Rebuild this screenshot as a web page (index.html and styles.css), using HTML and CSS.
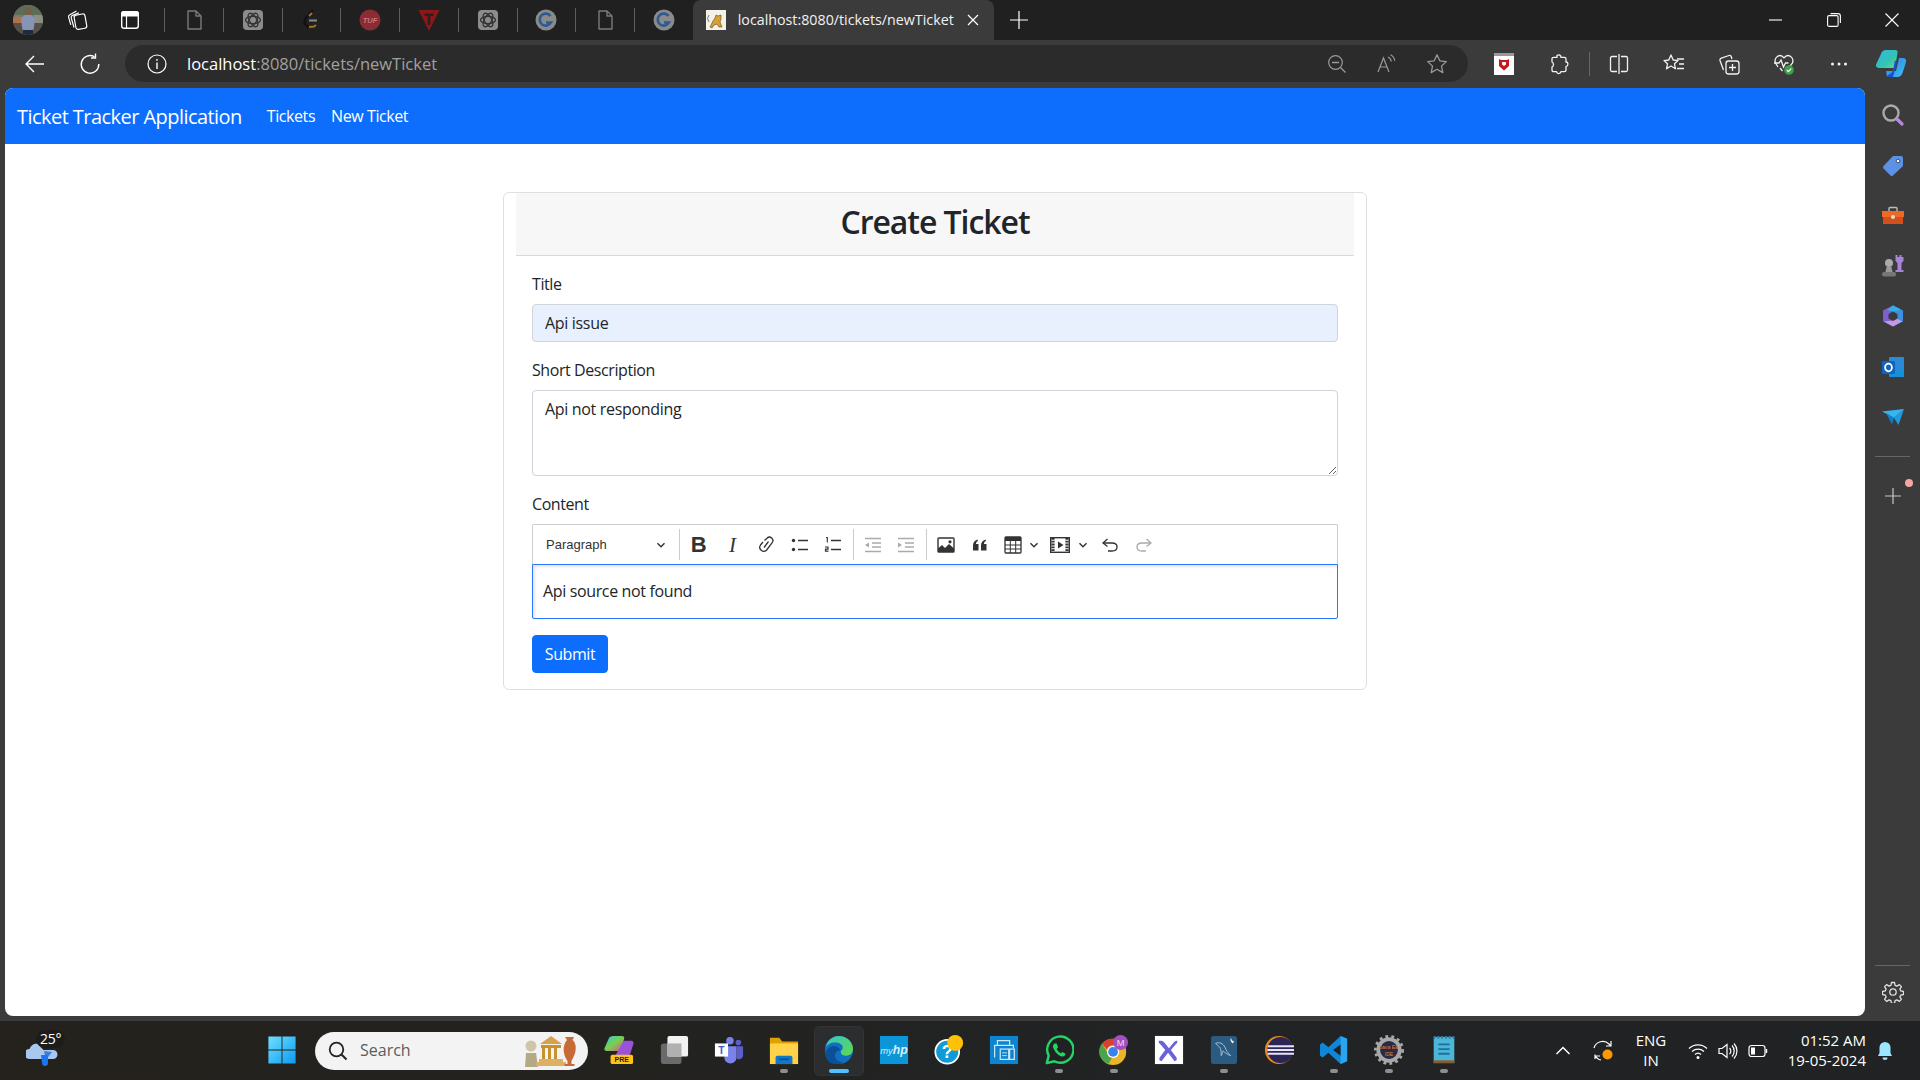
FILE: index.html
```html
<!DOCTYPE html>
<html lang="en">
<head>
<meta charset="utf-8">
<title>localhost:8080/tickets/newTicket</title>
<link rel="stylesheet" href="styles.css">
</head>
<body>
<svg class="defs" aria-hidden="true">
  <symbol id="doc" viewBox="0 0 24 24"><path d="M6 3h8l5 5v13H6z M14 3v5h5" fill="none" stroke="#7a7a7a" stroke-width="1.4" stroke-linejoin="round"/></symbol>
  <symbol id="gpt" viewBox="0 0 24 24"><rect x="2" y="2" width="20" height="20" rx="4" fill="#8c8c8c"/><g fill="none" stroke="#333" stroke-width="1.3"><ellipse cx="12" cy="12" rx="7.5" ry="3.6"/><ellipse cx="12" cy="12" rx="7.5" ry="3.6" transform="rotate(60 12 12)"/><ellipse cx="12" cy="12" rx="7.5" ry="3.6" transform="rotate(120 12 12)"/></g></symbol>
  <symbol id="gg" viewBox="0 0 24 24"><circle cx="12" cy="12" r="10.5" fill="#8a8a8a"/><path d="M16.5 8a6 6 0 1 0 .5 6.5H12" fill="none" stroke="#2d5a94" stroke-width="2.6"/></symbol>
  <symbol id="chev" viewBox="0 0 10 10"><path d="M1.5 3.2 5 6.8l3.5-3.6" fill="none" stroke="#333" stroke-width="1.4"/></symbol>
</svg>

<header class="tabstrip">
  <div class="tab-lead lead-a">
    <svg class="ic30" viewBox="0 0 30 30"><defs><clipPath id="av"><circle cx="15" cy="15" r="15"/></clipPath></defs><g clip-path="url(#av)"><rect width="30" height="30" fill="#7a7a70"/><rect width="30" height="10" fill="#5d6e55"/><rect y="12" width="10" height="6" fill="#b0704a"/><rect x="21" y="10" width="9" height="9" fill="#8a8f80"/><rect y="18" width="30" height="12" fill="#55504a"/><path d="M8 13l4-3h6l4 3-1 9-1 4H10l-1-4z" fill="#8794b4"/><circle cx="15" cy="6.500" r="3.500" fill="#7a5c48"/><rect x="10" y="25" width="10" height="5" fill="#1f2a3c"/></g></svg>
  </div>
  <div class="tab-lead lead-b">
    <svg class="ic22" viewBox="0 0 22 22"><g fill="none" stroke="#fff" stroke-width="1.200" stroke-linejoin="round"><rect x="9" y="5.500" width="11" height="14.500" rx="2.300" transform="rotate(-10 14 13)"/><path d="M8 18.500 5.200 8.800c-.3-1.100.2-2 1.300-2.400L13 3.800"/><path d="M4.800 15.800 2.600 8.200c-.3-1.100.2-2 1.300-2.400L10.500 2"/></g></svg>
  </div>
  <div class="tab-lead lead-c">
    <svg class="ic22" viewBox="0 0 22 22"><rect x="2.700" y="2.700" width="16.600" height="16.600" rx="2.500" fill="none" stroke="#fff" stroke-width="1.400"/><path d="M2 7.500V5a3 3 0 0 1 3-3h12a3 3 0 0 1 3 3v2.500z" fill="#fff"/><path d="M7.500 7v12" stroke="#fff" stroke-width="1.200"/></svg>
  </div>
  <div class="tab-pin"><svg class="ic24"><use href="#doc"/></svg></div>
  <div class="tab-pin"><svg class="ic24"><use href="#gpt"/></svg></div>
  <div class="tab-pin"><svg class="ic24" viewBox="0 0 24 24"><path d="M14 2 6.500 10.500c-1.500 2-1.500 4 0 6l3 3" fill="none" stroke="#111" stroke-width="2"/><path d="M10 8l3-3M10 19l5-.5 2-1.500" fill="none" stroke="#a8701a" stroke-width="2"/><path d="M10 12.500h8" stroke="#8a8a8a" stroke-width="2"/></svg></div>
  <div class="tab-pin"><svg class="ic24" viewBox="0 0 24 24"><circle cx="12" cy="12" r="10.500" fill="#8a2c34"/><text x="12" y="14.500" class="tuf">TUF</text></svg></div>
  <div class="tab-pin"><svg class="ic24" viewBox="0 0 24 24"><path d="M1.500 2h21L12 23z" fill="#8c1717"/><path d="M7.500 5.500h9v2.500h-3.200v9h-2.600V8H7.500z" fill="#2a2020"/></svg></div>
  <div class="tab-pin"><svg class="ic24"><use href="#gpt"/></svg></div>
  <div class="tab-pin"><svg class="ic24"><use href="#gg"/></svg></div>
  <div class="tab-pin"><svg class="ic24"><use href="#doc"/></svg></div>
  <div class="tab-pin"><svg class="ic24"><use href="#gg"/></svg></div>
  <div class="tab-active">
    <svg class="ic20" viewBox="0 0 20 20"><rect width="20" height="20" fill="#f4f1e8"/><path d="M4 17l3-6 2-3 1-3 2 1 3-1 0 4-1 3 2 5h-3l-2-3-3 1-2 3z" fill="#d9a032" stroke="#5a4420" stroke-width=".6"/><path d="M3 12 1.500 8.500 3 5" fill="none" stroke="#777" stroke-width="1"/></svg>
    <span class="tab-title">localhost:8080/tickets/newTicket</span>
    <svg class="ic12" viewBox="0 0 12 12"><path d="M1 1l10 10M11 1 1 11" stroke="#fff" stroke-width="1.200"/></svg>
  </div>
  <svg class="newtab" viewBox="0 0 18 18"><path d="M9 0v18M0 9h18" stroke="#fff" stroke-width="1.200"/></svg>
  <div class="winbtns">
    <svg class="ic14" viewBox="0 0 14 14"><path d="M0 7h13" stroke="#fff" stroke-width="1.100"/></svg>
    <svg class="ic14" viewBox="0 0 14 14"><rect x=".6" y="2.600" width="10.500" height="10.800" rx="1.500" fill="none" stroke="#fff" stroke-width="1.100"/><path d="M3.500.6h7.500a2.400 2.400 0 0 1 2.400 2.400v7" fill="none" stroke="#fff" stroke-width="1.100"/></svg>
    <svg class="ic14" viewBox="0 0 14 14"><path d="M.5.5l13 13M13.500.5l-13 13" stroke="#fff" stroke-width="1.100"/></svg>
  </div>
</header>

<nav class="toolbar">
  <div class="nav-btn"><svg class="ic22" viewBox="0 0 22 22"><path d="M20 11H2.500M10 3 2 11l8 8" fill="none" stroke="#fff" stroke-width="1.400"/></svg></div>
  <div class="nav-btn"><svg class="ic22" viewBox="0 0 22 22"><path d="M15.500 3.800A8.800 8.800 0 1 0 19.800 11" fill="none" stroke="#fff" stroke-width="1.400"/><path d="M16.500 .5v4.500H12" fill="none" stroke="#fff" stroke-width="1.400"/></svg></div>
  <div class="omnibox">
    <svg class="ic20" viewBox="0 0 20 20"><circle cx="10" cy="10" r="9" fill="none" stroke="#fff" stroke-width="1.200"/><path d="M10 8.500V15M10 5v1.800" stroke="#fff" stroke-width="1.400"/></svg>
    <span class="url"><span class="url-host">localhost</span>:8080/tickets/newTicket</span>
    <div class="omni-actions">
      <svg class="ic20" viewBox="0 0 20 20"><circle cx="8.500" cy="8.500" r="6.800" fill="none" stroke="#9a9a9a" stroke-width="1.200"/><path d="M5 8.500h7M13.500 13.500l5 5" stroke="#9a9a9a" stroke-width="1.300"/></svg>
      <svg class="ic20" viewBox="0 0 20 20"><path d="M1 18 6.500 4l5.500 14M3 13h7" fill="none" stroke="#9a9a9a" stroke-width="1.200"/><path d="M11 3c2 .8 3 2.500 3.200 4.500M13.500 .8c2.500 1.200 4 3.500 4.200 6" fill="none" stroke="#9a9a9a" stroke-width="1.200"/></svg>
      <svg class="ic22" viewBox="0 0 22 22"><path d="M11 1.800l2.800 6 6.500.8-4.800 4.500 1.300 6.500-5.800-3.300-5.800 3.300 1.300-6.500L1.700 8.600l6.500-.8z" fill="none" stroke="#9a9a9a" stroke-width="1.300" stroke-linejoin="round"/></svg>
    </div>
  </div>
  <div class="tool-actions">
    <div class="tool-slot"><svg class="ic22" viewBox="0 0 22 22"><rect x="1" y="0" width="20" height="22" fill="#fff"/><rect x="1" y="0" width="20" height="3" fill="#999"/><path d="M6 6l2 1h6l2-1v7l-5 4.500L6 13z" fill="#c8161d"/><path d="M9 9h4v2.500l-2 1.500-2-1.500z" fill="#fff"/></svg></div>
    <div class="tool-slot"><svg class="ic22" viewBox="0 0 22 22"><path d="M9 2.500c2-1.500 4-.3 4 1.800h3.500c1 0 1.500.7 1.500 1.500V9c2.200 0 3 3.500 0 4.500v3.500c0 1-.7 1.700-1.500 1.700H13c-.5 2.500-4 2.500-4.500 0H5.500C4.500 18.700 4 18 4 17v-3c2-.8 2-4 0-5V5.800c0-1 .7-1.500 1.500-1.500H9z" fill="none" stroke="#f2f2f2" stroke-width="1.300"/></svg></div>
    <div class="tool-sep"></div>
    <div class="tool-slot"><svg class="ic22" viewBox="0 0 22 22"><path d="M9 3.500H4A1.500 1.500 0 0 0 2.500 5v12A1.500 1.500 0 0 0 4 18.500h5M13 3.500h5A1.500 1.500 0 0 1 19.500 5v12a1.500 1.500 0 0 1-1.500 1.500h-5M11 1v20" fill="none" stroke="#f2f2f2" stroke-width="1.300"/></svg></div>
    <div class="tool-slot"><svg class="ic22" viewBox="0 0 22 22"><path d="M8 2l2.200 5 4.800.6-3.500 3.200 1 5L8 13l-4.500 2.800 1-5L1 7.600l4.800-.6z" fill="none" stroke="#f2f2f2" stroke-width="1.300" stroke-linejoin="round"/><path d="M14 6h7M16 11h5M14 15.500h7" stroke="#f2f2f2" stroke-width="1.300"/></svg></div>
    <div class="tool-slot"><svg class="ic22" viewBox="0 0 22 22"><rect x="8" y="8" width="13" height="13" rx="2.500" fill="none" stroke="#f2f2f2" stroke-width="1.300"/><path d="M14.500 11v7M11 14.500h7" stroke="#f2f2f2" stroke-width="1.300"/><path d="M5.500 17 2 7.500c-.3-1 .2-2 1.300-2.300L11 2.500c1-.3 2 .3 2.300 1.300L14 6" fill="none" stroke="#f2f2f2" stroke-width="1.300"/></svg></div>
    <div class="tool-slot"><svg class="ic22" viewBox="0 0 22 22"><path d="M5 14 2.500 10C1 6 4 2.500 7 2.500c2 0 3 1 4 2.300 1-1.300 2-2.300 4-2.300 3 0 6 3.500 4.500 7.500l-4 5" fill="none" stroke="#f2f2f2" stroke-width="1.300"/><path d="M1 10h5l2-3 2.500 7 2-4h3" fill="none" stroke="#f2f2f2" stroke-width="1.300"/><path d="M7 15l2.500 3" stroke="#f2f2f2" stroke-width="1.300"/><circle cx="16" cy="17" r="4.800" fill="#3fa04a"/><path d="M13.800 17l1.600 1.600 2.800-3" fill="none" stroke="#fff" stroke-width="1.100"/></svg></div>
    <div class="tool-slot"><svg class="ic22" viewBox="0 0 22 22"><circle cx="4.500" cy="11" r="1.500" fill="#f2f2f2"/><circle cx="11" cy="11" r="1.500" fill="#f2f2f2"/><circle cx="17.500" cy="11" r="1.500" fill="#f2f2f2"/></svg></div>
    <div class="copilot-slot"><svg class="ic32" viewBox="0 0 32 32"><defs><linearGradient id="cpa" x1="0" y1="0" x2="1" y2="1"><stop offset="0" stop-color="#2fb7e8"/><stop offset=".6" stop-color="#33c4b0"/><stop offset="1" stop-color="#6ad69a"/></linearGradient><linearGradient id="cpb" x1="0" y1="0" x2="1" y2="1"><stop offset="0" stop-color="#2a7fe6"/><stop offset="1" stop-color="#40c0f0"/></linearGradient></defs><path d="M11 2h9c2 0 3 1 2.500 3L20 20H4c-2 0-3.500-1.500-3-3.500L6 6c.6-2.500 2.500-4 5-4z" fill="url(#cpa)"/><path d="M12 29h10c3 0 4.500-1.500 5.500-4L31 14c.6-2-.6-4-3-4H24l-3 13H11z" fill="url(#cpb)"/><path d="M20 12l-2 10c-.4 2-1.500 3-3.500 4L11 29h7l4-14z" fill="#1c52c8"/></svg></div>
  </div>
</nav>

<div class="main">
  <div class="gutter"></div>
  <main class="page">
    <div class="navbar">
      <a class="brand">Ticket Tracker Application</a>
      <a class="nav-link">Tickets</a>
      <a class="nav-link">New Ticket</a>
    </div>
    <section class="card">
      <div class="card-header"><h2 class="card-title">Create Ticket</h2></div>
      <form class="card-body">
        <div class="field">
          <label class="label">Title</label>
          <input class="control filled" type="text" value="Api issue">
        </div>
        <div class="field">
          <label class="label">Short Description</label>
          <textarea class="control area">Api not responding</textarea>
        </div>
        <div class="field">
          <label class="label">Content</label>
          <div class="ck-bar">
            <div class="ck-drop"><span class="ck-drop-text">Paragraph</span><svg class="ic10"><use href="#chev"/></svg></div>
            <span class="ck-sep"></span>
            <span class="ck-btn"><b class="ck-b">B</b></span>
            <span class="ck-btn"><i class="ck-i">I</i></span>
            <span class="ck-btn"><svg class="ic20" viewBox="0 0 20 20"><g fill="none" stroke="#333" stroke-width="1.300"><path d="M8.500 5.500 11 3.200a3.400 3.400 0 0 1 5 4.600l-5.500 7.400A4 4 0 0 1 4.500 10L7 7"/><path d="M12.500 6.500 8 12.500"/></g></svg></span>
            <span class="ck-btn"><svg class="ic20" viewBox="0 0 20 20"><circle cx="3.500" cy="5.500" r="1.700" fill="#333"/><circle cx="3.500" cy="14.500" r="1.700" fill="#333"/><path d="M8 5.500h10M8 14.500h10" stroke="#333" stroke-width="1.500"/></svg></span>
            <span class="ck-btn"><svg class="ic20" viewBox="0 0 20 20"><path d="M3 2.500h1.300v5" fill="none" stroke="#333" stroke-width="1.100"/><path d="M2 12h3v2.200H2.500v2H5.500" fill="none" stroke="#333" stroke-width="1.200"/><path d="M8 5.500h10M8 14.500h10" stroke="#333" stroke-width="1.500"/></svg></span>
            <span class="ck-sep"></span>
            <span class="ck-btn"><svg class="ic20" viewBox="0 0 20 20"><path d="M2 3.500h16M9 8h9M9 12h9M2 16.500h16" stroke="#aaa" stroke-width="1.500"/><path d="M6 7.500v5L2 10z" fill="#aaa"/></svg></span>
            <span class="ck-btn"><svg class="ic20" viewBox="0 0 20 20"><path d="M2 3.500h16M9 8h9M9 12h9M2 16.500h16" stroke="#aaa" stroke-width="1.500"/><path d="M2 7.500v5L6 10z" fill="#aaa"/></svg></span>
            <span class="ck-sep"></span>
            <span class="ck-btn"><svg class="ic20" viewBox="0 0 20 20"><rect x="2" y="3" width="16" height="14" rx=".8" fill="none" stroke="#333" stroke-width="1.400"/><path d="M2 17v-3.500l4-3.500 3 3 4-4 5 4.500V17z" fill="#333"/><circle cx="14" cy="6.800" r="1.600" fill="#333"/></svg></span>
            <span class="ck-btn"><svg class="ic20" viewBox="0 0 20 20"><path d="M3 15.500V10.500c0-3 1.500-5 4.500-6l.5 1.500C6.500 6.700 6 7.700 6 9h2.500v6.500zM11 15.500V10.500c0-3 1.500-5 4.500-6l.5 1.500c-1.500.7-2 1.700-2 3h2.500v6.500z" fill="#333"/></svg></span>
            <span class="ck-btn"><svg class="ic20" viewBox="0 0 20 20"><rect x="2" y="2" width="16" height="16" rx="1" fill="none" stroke="#333" stroke-width="1.300"/><rect x="2" y="2" width="16" height="4" fill="#333"/><path d="M7.300 6v12M12.700 6v12M2 10h16M2 14h16" stroke="#333" stroke-width="1"/></svg></span>
            <span class="ck-arrow"><svg class="ic10"><use href="#chev"/></svg></span>
            <span class="ck-btn ck-gap"><svg class="ic20" viewBox="0 0 20 20"><rect x=".7" y="2.700" width="18.600" height="14.600" fill="none" stroke="#333" stroke-width="1.400"/><path d="M3 3v14M17 3v14" stroke="#333" stroke-width="3.200" stroke-dasharray="1.800 1"/><path d="M8 6.500v7l5.500-3.500z" fill="#333"/></svg></span>
            <span class="ck-arrow wide"><svg class="ic10"><use href="#chev"/></svg></span>
            <span class="ck-btn ck-gap"><svg class="ic20" viewBox="0 0 20 20"><path d="M7.500 4 3 8l4.500 3.500" fill="none" stroke="#333" stroke-width="1.300"/><path d="M3 8h9c3 0 5 1.600 5 4s-2 4-5 4H8" fill="none" stroke="#333" stroke-width="1.300"/></svg></span>
            <span class="ck-btn"><svg class="ic20" viewBox="0 0 20 20"><path d="M12.500 4 17 8l-4.500 3.500" fill="none" stroke="#aaa" stroke-width="1.300"/><path d="M17 8H8c-3 0-5 1.600-5 4s2 4 5 4h4" fill="none" stroke="#aaa" stroke-width="1.300"/></svg></span>
          </div>
          <div class="ck-editor">Api source not found</div>
        </div>
        <button class="submit" type="button">Submit</button>
      </form>
    </section>
  </main>
  <aside class="sidebar">
    <div class="side-slot"><svg class="ic24" viewBox="0 0 24 24"><circle cx="10" cy="10" r="7.500" fill="none" stroke="#aaa" stroke-width="2.400"/><path d="M16 16l5 5" stroke="#b98ad8" stroke-width="3.200" stroke-linecap="round"/></svg></div>
    <div class="side-slot"><svg class="ic24" viewBox="0 0 24 24"><path d="M12 3h8a2 2 0 0 1 2 2v8L12 22.500a2 2 0 0 1-2.500 0l-7-7a2 2 0 0 1 0-2.500z" fill="#5b92e8"/><circle cx="17" cy="8" r="1.800" fill="#fff" stroke="#333" stroke-width=".8"/></svg></div>
    <div class="side-slot"><svg class="ic24" viewBox="0 0 24 24"><path d="M8 7V4.500a1 1 0 0 1 1-1h6a1 1 0 0 1 1 1V7" fill="none" stroke="#bbb" stroke-width="1.400"/><path d="M1 7h22v6H1z" fill="#ee6a24"/><path d="M2 13h20v7H2z" fill="#d4501a"/><rect x="10" y="11" width="4" height="4" rx="2" fill="#ddd"/></svg></div>
    <div class="side-slot"><svg class="ic24" viewBox="0 0 24 24"><path d="M14.500 1h2v2h2V1h2v2h2v4l-2 2v7h2v2h-8v-2h2V9l-2-2z" fill="#a784d8"/><circle cx="8" cy="9" r="4" fill="#aaa"/><path d="M5.500 13h5l1 5h-7z" fill="#999"/><rect x="1" y="18" width="14" height="4.500" rx="2" fill="#777"/></svg></div>
    <div class="side-slot"><svg class="ic24" viewBox="0 0 24 24"><path d="M12 1.500 22 6.500v11L12 22.500z" fill="#3f8fe0"/><path d="M12 1.500 2 6.500v11l10 5z" fill="#7c5fd0"/><path d="M3 17.500 12 22.500l9-5-5-3-4 2z" fill="#c59ae4"/><path d="M6 6 12 1.500l8 4-8 2z" fill="#2fb0e8"/><path d="M12 7.500l4.500 2.500v4.500L12 17l-4.500-2.500V10z" fill="#3b3b3b"/></svg></div>
    <div class="side-slot"><svg class="ic24" viewBox="0 0 24 24"><rect x="8" y="2" width="15" height="20" rx="1" fill="#2a8ad8"/><path d="M8 12l7.500 4.500L23 12v9a1 1 0 0 1-1 1H9a1 1 0 0 1-1-1z" fill="#1690d8"/><rect x="1" y="6" width="13" height="13" rx="1" fill="#0e64c0"/><ellipse cx="7.500" cy="12.500" rx="3.400" ry="3.800" fill="none" stroke="#fff" stroke-width="1.800"/></svg></div>
    <div class="side-slot"><svg class="ic24" viewBox="0 0 24 24"><path d="M1 6.500 23 4 13 13z" fill="#35b6ef"/><path d="M23 4 13 13l4.500 7z" fill="#1f9be0"/><path d="M5 8 13 13l-2 6.500z" fill="#1379c8"/></svg></div>
    <div class="side-rule"></div>
    <div class="side-slot plus"><svg class="ic16" viewBox="0 0 16 16"><path d="M8 0v16M0 8h16" stroke="#c8c8c8" stroke-width="1.200"/></svg><span class="side-dot"></span></div>
    <div class="side-rule bottom"></div>
    <div class="side-slot settings"><svg class="ic22" viewBox="0 0 22 22"><path d="M9.500 1.500h3l.6 2.800 1.800.8 2.500-1.500 2 2-1.500 2.500.8 1.800 2.800.6v3l-2.800.6-.8 1.800 1.500 2.500-2 2-2.500-1.500-1.800.8-.6 2.800h-3l-.6-2.800-1.800-.8-2.500 1.500-2-2 1.500-2.500-.8-1.800-2.800-.6v-3l2.800-.6.800-1.800-1.500-2.500 2-2 2.500 1.500 1.800-.8z" fill="none" stroke="#e0e0e0" stroke-width="1.300" stroke-linejoin="round"/><circle cx="11" cy="11" r="3.200" fill="none" stroke="#e0e0e0" stroke-width="1.300"/></svg></div>
  </aside>
</div>
<div class="strip"></div>

<footer class="taskbar">
  <div class="tb-weather">
    <svg class="ic32" viewBox="0 0 32 32"><path d="M3 24a5 5 0 0 1 .5-10c1.500-4 5-6 8-5l6 6h9.500a4.500 4.500 0 0 1 0 9z" fill="#a9c8ef"/><path d="M18 16l8 1-6 8z" fill="#3a7fe0"/><path d="M15 20h7v8a3 3 0 0 1-6 0z" fill="#1c74ec"/></svg>
    <span class="temp">25°</span>
  </div>
  <div class="tb-slot tb-start"><svg class="ic32" viewBox="0 0 32 32"><defs><linearGradient id="wn" x1="0" y1="0" x2="1" y2="1"><stop offset="0" stop-color="#6fe0ff"/><stop offset="1" stop-color="#0c9af0"/></linearGradient></defs><path d="M1.500 1.500h14v14h-14zM16.500 1.500h14v14h-14zM1.500 16.500h14v14h-14zM16.500 16.500h14v14h-14z" fill="url(#wn)"/></svg></div>
  <div class="search-pill">
    <svg class="ic20" viewBox="0 0 20 20"><circle cx="8.500" cy="8.500" r="6.800" fill="none" stroke="#222" stroke-width="1.800"/><path d="M13.500 13.500 18.500 18.500" stroke="#222" stroke-width="2"/></svg>
    <span class="search-text">Search</span>
    <svg class="pill-art" viewBox="0 0 56 34"><circle cx="7" cy="12" r="5.500" fill="#cfc5a8"/><path d="M2 19h10l2 14H1z" fill="#b5a885"/><path d="M16 10 27 2l11 8z" fill="#d8a24a"/><path d="M17 11h20v3H17zM18 14h3v11h-3zM24 14h3v11h-3zM30 14h3v11h-3z" fill="#c9922f"/><path d="M15 25h24v3H15zM12 28h30v4H12z" fill="#dcb066"/><path d="M41 3h9l-1.500 3c4 3 4.500 11 .5 18l-1.500 3v3h3v2h-10v-2h3v-3c-5-7-5-16-.5-21z" fill="#c86a35"/></svg>
  </div>
  <div class="tb-slot"><svg class="ic32" viewBox="0 0 32 32"><defs><linearGradient id="cq" x1="0" y1="0" x2="1" y2="1"><stop offset="0" stop-color="#2fc7e8"/><stop offset=".5" stop-color="#7ad04a"/><stop offset="1" stop-color="#e04aa0"/></linearGradient></defs><path d="M10 1h9c2 0 3 1 2.500 3L18 17H3c-2 0-3-1.500-2.500-3L5 4c.6-2 2.500-3 5-3z" fill="url(#cq)"/><path d="M21 6h8c2 0 3 1.500 2.500 3L28 20c-.6 1.500-2 2-4 2H12z" fill="#9a52d8"/><rect x="7" y="21" width="24" height="10" rx="2" fill="#ffc21a"/><text x="19" y="29.300" class="pre">PRE</text></svg></div>
  <div class="tb-slot"><svg class="ic32" viewBox="0 0 32 32"><rect x="2" y="9" width="22" height="22" rx="3" fill="#6a6a6a"/><rect x="9" y="1" width="22" height="22" rx="2" fill="#f2f2f2"/><rect x="9" y="9" width="15" height="14" fill="#b0b0b0"/></svg></div>
  <div class="tb-slot"><svg class="ic32" viewBox="0 0 32 32"><circle cx="17" cy="6" r="4" fill="#7b83eb"/><circle cx="26" cy="8" r="3" fill="#5b5fc7"/><path d="M11 12h13v12a6.500 6.500 0 0 1-13 0z" fill="#7b83eb"/><path d="M24 12h7v9c0 3-2 5-5 5l-2-1z" fill="#5b5fc7"/><rect x="1" y="9" width="14" height="14" fill="#fff"/><text x="8" y="20.500" class="teams-t">T</text></svg></div>
  <div class="tb-slot"><svg class="ic32" viewBox="0 0 32 32"><path d="M1 3h10l3 4h17v24H1z" fill="#e0a100"/><path d="M1 9h30v22H1z" fill="#ffd24a"/><path d="M9 22h14a2 2 0 0 1 2 2v7H7v-7a2 2 0 0 1 2-2z" fill="#0f78c8"/><rect x="11" y="25" width="10" height="1.800" fill="#0a4f8f"/></svg><span class="dot"></span></div>
  <div class="tb-slot active"><svg class="ic32" viewBox="0 0 32 32"><defs><linearGradient id="eg" x1="0" y1="0" x2="1" y2="1"><stop offset="0" stop-color="#36c5c8"/><stop offset="1" stop-color="#62d84a"/></linearGradient></defs><circle cx="16" cy="16" r="15" fill="#0f6fc0"/><path d="M1.500 14C3 6 9 1 16 1c8 0 15 6 15 14 0 4-3 7-7 7-3 0-6-1-6-4 0-2 2-2 2-5 0-3-4-5-8-5C7 8 3 10 1.500 14z" fill="url(#eg)"/><path d="M10 31c-5-1-9-6-8.500-12C3 14 7 12 11 12c3 0 6 2 6 4-4 1-6 4-5 8 1 3 4 5 8 5l-3 2z" fill="#0b4f96"/></svg><span class="dot wide"></span></div>
  <div class="tb-slot"><svg class="ic32" viewBox="0 0 32 32"><rect x="1" y="1" width="30" height="30" fill="#0c96d8"/><text x="16" y="20" class="myhp">my<tspan class="myhp-i">hp</tspan></text></svg></div>
  <div class="tb-slot"><svg class="ic32" viewBox="0 0 34 34"><circle cx="15" cy="19" r="13.500" fill="#0f9ad8" stroke="#fff" stroke-width="2"/><text x="15" y="26" class="help">?</text><circle cx="24" cy="9" r="9" fill="#ffc107"/></svg></div>
  <div class="tb-slot"><svg class="ic32" viewBox="0 0 32 32"><rect x="1" y="1" width="30" height="30" fill="#0c84d0"/><g fill="none" stroke="#cfe6f6" stroke-width="1.300"><path d="M9 11V6h13v5"/><path d="M6 24V11h20v3"/><rect x="12" y="15" width="9" height="11"/><rect x="22" y="15" width="5" height="11"/></g><path d="M14 19h5M14 22h5" stroke="#cfe6f6" stroke-width="1"/></svg></div>
  <div class="tb-slot"><svg class="ic32" viewBox="0 0 32 32"><path d="M3 30l2-8A14 14 0 1 1 11 28z" fill="none" stroke="#25d366" stroke-width="2.600" stroke-linejoin="round"/><path d="M11 9c-2 2-2 4 0 7 2 4 5 6 8 7 2 0 4-1 4-3l-3.500-2-1.500 1.500c-2-1-3.500-2.500-4.500-4.500L15 13l-1.500-4z" fill="#25d366"/></svg><span class="dot"></span></div>
  <div class="tb-slot chrome"><svg class="ic32" viewBox="0 0 32 32"><circle cx="15" cy="18" r="14" fill="#e9b32a"/><path d="M15 4a14 14 0 0 1 12 7H15a7 7 0 0 0-6.500 4.500L3 9A14 14 0 0 1 15 4z" fill="#d8402f"/><path d="M3 9l6 10 6 3-5 9A14 14 0 0 1 3 9z" fill="#4aa44a"/><circle cx="15" cy="18" r="6.500" fill="#fff"/><circle cx="15" cy="18" r="5.200" fill="#3a82f0"/><circle cx="23" cy="8" r="8" fill="#a44fc0"/><text x="23" y="11.500" class="m">M</text></svg><span class="dot"></span></div>
  <div class="tb-slot"><svg class="ic32" viewBox="0 0 32 32"><rect x="1" y="1" width="30" height="30" fill="#fff"/><path d="M7 6c2 0 3 .5 4 2l5 6 5-6c1-1.500 2-2 4-2 0 2-.5 3-2 4l-5 6 6 8c.5 1 .5 2 0 3l-2 1-7-9-7 9-2-1c-.5-1-.5-2 0-3l6-8-5-6c-1.500-1-2-2-2-4z" fill="#6a62dc"/></svg></div>
  <div class="tb-slot"><svg class="ic32" viewBox="0 0 32 32"><rect x="2" y="1" width="28" height="30" rx="3" fill="#2c5b82"/><path d="M7 9c4-2 8 0 10 4 1 3 3 6 6 9-3-1-6-3-8-5-1 2-1 4-2 5 0-3 0-6-1-8s-3-3-5-5z" fill="none" stroke="#a8c4d8" stroke-width="1"/><path d="M23 3l2 3 2 1-2 2-2-3z" fill="#e8eef2"/></svg><span class="dot"></span></div>
  <div class="tb-slot"><svg class="ic32" viewBox="0 0 32 32"><circle cx="16" cy="16" r="15" fill="#e58a1e"/><circle cx="17.500" cy="16" r="14" fill="#2c2558"/><path d="M4 12h28M3.500 16h29M4 20h28" stroke="#e8e4f4" stroke-width="2"/></svg></div>
  <div class="tb-slot"><svg class="ic32" viewBox="0 0 32 32"><path d="M23 1l7 3v24l-7 3L10 19l-6 5-3-2V10l3-2 6 5z" fill="#0f86d8"/><path d="M23 1l7 3v24l-7 3z" fill="#2aa4ee"/><path d="M23 10v12l-8-6z" fill="#202223"/></svg><span class="dot"></span></div>
  <div class="tb-slot"><svg class="ic32" viewBox="0 0 32 32"><circle cx="16" cy="16" r="11.500" fill="#2a2a48" stroke="#a8a8a8" stroke-width="4"/><circle cx="16" cy="16" r="14.500" fill="none" stroke="#a8a8a8" stroke-width="3" stroke-dasharray="3 3.400"/><text x="16" y="15" class="jee">Java EE</text><text x="16" y="22" class="jee">IDE</text></svg><span class="dot"></span></div>
  <div class="tb-slot"><svg class="ic32" viewBox="0 0 32 32"><rect x="5" y="2" width="22" height="28" fill="#4cb6d8"/><path d="M5 27h22v3H5z" fill="#8a5a30"/><path d="M6 1v3M10 1v3M14 1v3M18 1v3M22 1v3M26 1v3" stroke="#2a7ea8" stroke-width="2"/><path d="M10 10h12M10 15h12M10 20h12" stroke="#1e6f9c" stroke-width="2"/></svg><span class="dot"></span></div>
  <div class="tray">
    <div class="tray-slot w40"><svg class="ic16" viewBox="0 0 16 16"><path d="M1.500 11 8 4.500l6.500 6.500" fill="none" stroke="#fff" stroke-width="1.500"/></svg></div>
    <div class="tray-slot w40"><svg class="ic22" viewBox="0 0 22 22"><path d="M2 8a9 9 0 0 1 15-4l2 2M19 1v5h-5M3 14.500V19M3 16l2.500 2.500A8 8 0 0 0 9 20M3 16h5" fill="none" stroke="#fff" stroke-width="1.200"/><circle cx="15.500" cy="14.500" r="5" fill="#ff9800"/></svg></div>
    <div class="tray-lang">ENG<br>IN</div>
    <div class="tray-slot w30 first"><svg class="ic20" viewBox="0 0 20 20"><g fill="none" stroke="#fff" stroke-width="1.300"><path d="M1 7.500a13 13 0 0 1 18 0"/><path d="M4 10.500a9 9 0 0 1 12 0"/><path d="M7 13.500a4.500 4.500 0 0 1 6 0"/></g><circle cx="10" cy="16.500" r="1.500" fill="#fff"/></svg></div>
    <div class="tray-slot w30"><svg class="ic20" viewBox="0 0 20 20"><g fill="none" stroke="#fff" stroke-width="1.200"><path d="M1 7.500h3l5-4v13l-5-4H1z"/><path d="M11.500 7a4 4 0 0 1 0 6"/><path d="M14 4.500a8 8 0 0 1 0 11"/><path d="M16 2.500a11 11 0 0 1 0 15"/></g></svg></div>
    <div class="tray-slot w30"><svg class="ic20" viewBox="0 0 20 20"><rect x="1" y="4.500" width="16" height="11" rx="2.500" fill="none" stroke="#fff" stroke-width="1.200"/><rect x="3" y="6.500" width="4" height="7" fill="#fff"/><path d="M18.500 8v4" stroke="#fff" stroke-width="1.400"/></svg></div>
    <div class="clock">01:52 AM<br>19-05-2024</div>
    <div class="tray-slot w34"><svg class="ic20" viewBox="0 0 20 20"><path d="M10 1a5.500 5.500 0 0 0-5.500 5.500V12L3 15h14l-1.500-3V6.500A5.500 5.500 0 0 0 10 1z" fill="#9de6ff"/><path d="M7.500 16.500h5a2.500 2.500 0 0 1-5 0z" fill="#9de6ff"/></svg></div>
  </div>
</footer>
</body>
</html>
```

FILE: styles.css
```css
* { box-sizing: border-box; }
html, body { margin: 0; padding: 0; }
body {
  width: 1920px;
  height: 1080px;
  overflow: hidden;
  display: flex;
  flex-direction: column;
  background: #3b3b3b;
  color: #212529;
  font-family: "Open Sans", "Noto Sans", sans-serif;
  font-size: 16px;
}
svg { display: block; flex: none; }
.defs { position: absolute; width: 0; height: 0; }
.ic10 { width: 10px; height: 10px; }
.ic12 { width: 12px; height: 12px; }
.ic14 { width: 14px; height: 14px; }
.ic16 { width: 16px; height: 16px; }
.ic20 { width: 20px; height: 20px; }
.ic22 { width: 22px; height: 22px; }
.ic24 { width: 24px; height: 24px; }
.ic30 { width: 30px; height: 30px; }
.ic32 { width: 32px; height: 32px; }

/* Tab strip */
.tabstrip { display: flex; align-items: center; height: 40px; background: #202020; padding-left: 1px; flex: none; }
.tab-lead { height: 40px; display: flex; align-items: center; justify-content: center; flex: none; }
.lead-a { width: 54px; }
.lead-b { width: 44px; }
.lead-c { width: 62px; margin-right: 3px; }
.tab-pin { width: 58.750px; height: 24px; border-left: 1px solid #5e5e5e; display: flex; align-items: center; justify-content: center; flex: none; }
.tab-active {
  width: 301px; height: 40px; background: #3b3b3b; border-radius: 8px 8px 0 0;
  display: flex; align-items: center; padding: 0 13px; flex: none;
}
.tab-title { color: #f2f2f2; font-size: 14.250px; line-height: 20px; margin: -1px 0 0 12px; width: 223px; white-space: nowrap; }
.tab-active .ic12 { margin-left: 6.500px; }
.newtab { width: 18px; height: 18px; margin-left: 16px; }
.winbtns { margin-left: auto; display: flex; align-items: center; gap: 44px; padding-right: 21px; }
.tuf { font: italic 700 7.500px "Liberation Sans", sans-serif; fill: #c77; text-anchor: middle; }

/* Toolbar */
.toolbar { display: flex; align-items: center; height: 48px; background: #3b3b3b; flex: none; padding-bottom: 1px; }
.nav-btn { width: 55px; display: flex; justify-content: center; }
.nav-btn:first-child { margin-left: 7px; }
.omnibox { width: 1343px; margin-left: 8px; height: 37px; background: #2b2b2b; border-radius: 19px; display: flex; align-items: center; padding-left: 22px; }
.url { margin-left: 20px; color: #a0a0a0; font-size: 16.500px; white-space: nowrap; }
.url-host { color: #fff; }
.omni-actions { margin-left: auto; display: flex; align-items: center; gap: 29.500px; padding-right: 20px; }
.tool-actions { display: flex; align-items: center; margin-left: 8px; }
.tool-slot { width: 55px; display: flex; justify-content: center; flex: none; }
.tool-sep { width: 1px; height: 24px; background: #666; margin-left: 3px; flex: none; }
.tool-sep + .tool-slot { margin-left: 1.500px; }
.copilot-slot { width: 49px; display: flex; justify-content: center; flex: none; }

/* Main */
.main { display: flex; height: 928px; flex: none; }
.gutter { width: 5px; flex: none; }
.page { width: 1860px; flex: none; background: #fff; border-radius: 8px; overflow: hidden; }
.navbar { display: flex; align-items: center; height: 56px; background: #0d6efd; color: #fff; padding-left: 12px; }
.brand { font-size: 20px; margin-right: 25px; letter-spacing: -.55px; }
.nav-link { font-size: 16px; margin-right: 16px; letter-spacing: -.42px; }

.card { width: 864px; height: 498px; margin: 48px auto 0; border: 1px solid #dfdfdf; border-radius: 6px; background: #fff; }
.card-header { height: 63px; margin: 0 12px; padding-bottom: 4px; background: #f7f7f7; border-bottom: 1px solid #d9d9d9; display: flex; align-items: center; justify-content: center; }
.card-title { margin: 0; font-size: 32px; font-weight: 600; line-height: 1.2; letter-spacing: -1.050px; color: #212529; }
.card-body { padding: 16px 28px; }
.field { margin-bottom: 16px; }
.label { display: block; height: 24px; line-height: 24px; margin-bottom: 8px; font-size: 16px; letter-spacing: -.42px; }
.control {
  display: block; width: 100%; height: 38px; padding: 6px 12px;
  border: 1px solid #ced4da; border-radius: 4px; background: #fff; outline: none;
  font: inherit; line-height: 24px; color: #212529; letter-spacing: -.32px;
}
.filled { background: #e8f0fe; }
.area { height: 86px; resize: vertical; }
.ck-bar { display: flex; align-items: center; height: 40px; border: 1px solid #ccc; border-bottom: 0; border-radius: 2px 2px 0 0; }
.ck-drop { width: 143px; display: flex; align-items: center; justify-content: space-between; padding: 0 10px 0 13px; flex: none; }
.ck-drop-text { font: 13px "Liberation Sans", Arial, sans-serif; color: #333; }
.ck-sep { width: 1px; height: 31px; background: #ccc; margin: 0 2px 0 3px; flex: none; }
.ck-btn { width: 33.600px; display: flex; align-items: center; justify-content: center; flex: none; height: 24px; }
.ck-gap { margin-left: 5.500px; }
.ck-arrow { width: 8px; display: flex; justify-content: center; flex: none; }
.ck-arrow.wide { width: 11px; }
.ck-b { font: 700 22px "Liberation Sans", sans-serif; color: #333; line-height: 24px; }
.ck-i { font: italic 400 21px "Liberation Serif", serif; color: #333; line-height: 24px; }
.ck-editor {
  height: 55px; display: flex; align-items: center; padding: 0 0 1px 10px;
  border: 1px solid #2977ff; border-radius: 0 0 2px 2px;
  box-shadow: inset 2px 2px 3px rgba(0, 0, 0, .1);
  font-size: 16px; letter-spacing: -.36px;
}
.submit {
  display: block; width: 76px; height: 38px; margin-top: 16px; padding: 0;
  background: #0d6efd; color: #fff; border: 1px solid #0d6efd; border-radius: 4px;
  font: inherit; letter-spacing: -.42px;
}

/* Sidebar */
.sidebar { width: 55px; flex: none; display: flex; flex-direction: column; align-items: center; padding-top: 2px; }
.side-slot { width: 55px; height: 50.300px; display: flex; align-items: center; justify-content: center; flex: none; }
.side-rule { width: 35px; height: 1px; background: #666; margin-top: 14px; flex: none; }
.side-rule.bottom { margin-top: auto; }
.settings { padding-top: 2px; }
.plus { position: relative; margin-top: 14px; }
.side-dot { position: absolute; width: 8px; height: 8px; right: 7px; top: 8px; border-radius: 50%; background: #f4a6a0; }

.strip { height: 5px; flex: none; background: #3b3b3b; }

/* Taskbar */
.taskbar { display: flex; align-items: center; height: 59px; flex: none; padding-left: 14px; background: linear-gradient(90deg, #25221d 0, #23221f 30%, #212324 60%, #202224 100%); }
.tb-weather { width: 55px; height: 50px; display: flex; align-items: center; justify-content: center; position: relative; margin-right: 185px; }
.temp { position: absolute; left: 22px; top: 4px; padding: 0 4px; border-radius: 9px; background: #1c1c1c; color: #fff; font-size: 14px; letter-spacing: -.3px; line-height: 18px; }
.tb-slot { width: 55px; height: 50px; display: flex; flex-direction: column; align-items: center; padding-top: 8px; flex: none; border-radius: 5px; }
.tb-slot svg { width: 30px; height: 30px; margin-top: 1px; }
.tb-slot.active { width: 50px; margin: 0 2.500px; background: #2c2d2e; border: 1px solid #333; padding-top: 7px; }
.dot { width: 8px; height: 4px; margin-top: 4px; border-radius: 2px; background: #8e8e8e; }
.dot.wide { width: 20px; background: #4cc2ff; }
.search-pill {
  width: 273px; height: 38px; margin: 0 3px 0 6px; padding: 0 8px 0 13px; flex: none;
  display: flex; align-items: center; border-radius: 19px; background: #f3f3f3;
}
.search-text { margin: -1px 0 0 12px; color: #5c5c5c; font-size: 16px; }
.pill-art { width: 56px; height: 34px; margin-left: auto; }
.pre { font: 700 7.500px "Liberation Sans", sans-serif; fill: #222; text-anchor: middle; }
.teams-t { font: 700 11px "Liberation Sans", sans-serif; fill: #4b53bc; text-anchor: middle; }
.myhp { font: italic 400 10px "Liberation Sans", sans-serif; fill: #d8f0fa; text-anchor: middle; }
.myhp-i { font-weight: 700; font-size: 13px; }
.help { font: 700 20px "Liberation Sans", sans-serif; fill: #fff; text-anchor: middle; }
.m { font: 400 10px "Liberation Sans", sans-serif; fill: #f0d8f4; text-anchor: middle; }
.jee { font: 400 5.500px "Liberation Sans", sans-serif; fill: #e8801c; text-anchor: middle; }
.tray { display: flex; align-items: center; margin-left: 72px; color: #fff; font-size: 15px; }
.tray-slot { display: flex; justify-content: center; align-items: center; height: 40px; flex: none; }
.w40 { width: 40px; }
.w30 { width: 30px; }
.w34 { width: 34px; }
.first { margin-left: 4px; }
.tray-lang { width: 56px; text-align: center; line-height: 20px; flex: none; margin-top: -2px; }
.clock { width: 95px; text-align: right; line-height: 20px; padding-right: 2px; flex: none; margin-top: -2px; white-space: nowrap; }
```
